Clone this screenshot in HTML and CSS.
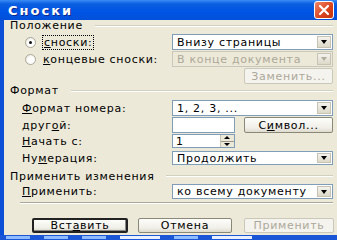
FILE: index.html
```html
<!DOCTYPE html>
<html lang="ru">
<head>
<meta charset="utf-8">
<link rel="stylesheet" href="styles.css">
</head>
<body>
<div class="win">
  <div class="title">
    <span class="title-text">Сноски</span>
    <div class="close">
      <svg width="12" height="12" viewBox="0 0 12 12"><path d="M2 2 L10 10 M10 2 L2 10" stroke="#fff" stroke-width="2.2" stroke-linecap="round"/></svg>
    </div>
  </div>
  <div class="frame">
    <div class="body">
      <div class="group-head g1"><span>Положение</span><i class="line"></i></div>
      <div class="row r1">
        <label class="radio-lbl"><span class="radio checked"></span><span class="focus"><u>с</u>носки:</span></label>
        <div class="combo"><span>Внизу страницы</span><b class="arrow"></b></div>
      </div>
      <div class="row r2">
        <label class="radio-lbl"><span class="radio"></span><span><u>к</u>онцевые сноски:</span></label>
        <div class="combo disabled"><span>В конце документа</span><b class="arrow"></b></div>
      </div>
      <div class="row r3">
        <span></span>
        <div class="btn disabled wide">Заменить...</div>
      </div>

      <div class="group-head g2"><span>Формат</span><i class="line"></i></div>
      <div class="row r4">
        <span class="lbl"><u>Ф</u>ормат номера:</span>
        <div class="combo"><span>1, 2, 3, ...</span><b class="arrow"></b></div>
      </div>
      <div class="row r5">
        <span class="lbl">друг<u>о</u>й:</span>
        <div class="pair">
          <div class="input"></div>
          <div class="btn wide">С<u>и</u>мвол...</div>
        </div>
      </div>
      <div class="row r6">
        <span class="lbl"><u>Н</u>ачать с:</span>
        <div class="spin"><span>1</span><b class="spin-btns"><i class="up"></i><i class="down"></i></b></div>
      </div>
      <div class="row r7">
        <span class="lbl">Ну<u>м</u>ерация:</span>
        <div class="combo"><span>Продолжить</span><b class="arrow"></b></div>
      </div>

      <div class="group-head g3"><span>Применить изменения</span><i class="line"></i></div>
      <div class="row r8">
        <span class="lbl"><u>П</u>рименить:</span>
        <div class="combo"><span>ко всему документу</span><b class="arrow"></b></div>
      </div>
      <div class="sep"></div>
      <div class="buttons">
        <div class="btn default b1">Вст<u>а</u>вить</div>
        <div class="btn b2">Отмена</div>
        <div class="btn disabled b3">Применить</div>
      </div>
    </div>
  </div>
  <div class="taskbar"><i></i><i></i><i></i><i class="w"></i><i></i><i class="w"></i></div>
</div>
</body>
</html>
```

FILE: styles.css
```css
* { box-sizing: border-box; }
html, body { margin: 0; padding: 0; background: #ece9d8; }
body { width: 337px; height: 240px; overflow: hidden; font-family: "DejaVu Sans", sans-serif; font-size: 11px; letter-spacing: 0.7px; color: #000; }
u { text-decoration: underline; text-underline-offset: 1px; }

.win { display: flex; flex-direction: column; height: 240px; }

.title {
  height: 20px; flex: none;
  background: linear-gradient(#3b8cf5 0px, #0a5ee0 4px, #0055e5 12px, #0250d8 20px);
  display: flex; align-items: center; justify-content: space-between;
  padding: 0 3px 0 8px;
}
.title-text { color: #fff; font-weight: bold; font-size: 13px; letter-spacing: 2px; text-shadow: 1px 1px 0 #0a2a8c; }
.close {
  width: 20px; height: 18px; border: 1px solid #fff; border-radius: 3px;
  background: linear-gradient(135deg, #f0866a, #d9421c 60%, #c0360f);
  display: flex; align-items: center; justify-content: center;
}

.frame { flex: 1; display: flex; border-left: 4px solid #0a4fd6; min-height: 0; }
.body { flex: 1; padding: 0 4px 0 6px; display: flex; flex-direction: column; }

.group-head { flex: none; display: flex; align-items: center; height: 11px; gap: 12px; line-height: 11px; }
.group-head .line { flex: 1; height: 2px; border-top: 1px solid #d0d0bf; border-bottom: 1px solid #fff; }
.g1 { margin-top: 0; }
.g2 { margin-top: 1px; }
.g3 { margin-top: 5px; height: 12px; }

.row { flex: none; display: flex; justify-content: space-between; align-items: center; padding-left: 12px; line-height: 13px; }
.lbl { display: block; }
.r1 { height: 16px; margin-top: 3px; }
.r2 { height: 16px; margin-top: 1px; }
.r3 { height: 16px; margin-top: 1px; }
.r4 { height: 16px; margin-top: 4px; }
.r5 { height: 16px; margin-top: 1px; }
.r6 { height: 14px; margin-top: 1px; }
.r7 { height: 14px; margin-top: 3px; }
.r8 { height: 15px; margin-top: 2px; }

.radio-lbl { display: flex; align-items: center; gap: 7px; padding-left: 3px; }
.radio { width: 11px; height: 11px; border-radius: 50%; border: 1px solid #aca899; background: radial-gradient(circle at 60% 60%, #fff 40%, #e2e0d3); position: relative; }
.radio.checked::after { content: ""; position: absolute; left: 3px; top: 3px; width: 3px; height: 3px; border-radius: 50%; background: #111; }
.focus { outline: 1px dotted #000; outline-offset: 0px; padding: 0 1px; }

.combo {
  width: 161px; height: 100%; background: #fff; border: 1px solid #7f9db9;
  display: flex; align-items: center; justify-content: space-between; padding-left: 4px;
}
.combo .arrow {
  width: 14px; height: calc(100% - 2px); margin-right: 1px;
  background: linear-gradient(#f4f3ee, #dcd9c8); border: 1px solid #c6c3b4; position: relative;
}
.combo .arrow::after { content: ""; position: absolute; left: 3px; top: calc(50% - 2px); border-left: 3.5px solid transparent; border-right: 3.5px solid transparent; border-top: 4px solid #000; }
.combo.disabled { background: #ece9d8; border-color: #c9c7ba; color: #aca899; }
.combo.disabled .arrow::after { border-top-color: #b0ad9f; }

.btn {
  width: 96px; height: 100%; border: 1px solid #8a8878; border-radius: 2px;
  background: linear-gradient(#fdfdfb, #f0efe8 70%, #dedbcd);
  display: flex; align-items: center; justify-content: center;
}
.btn.wide { width: 89px; }
.btn.disabled { color: #aca899; border-color: #cac8bb; background: #f4f3ee; }
.btn.default { border: 2px solid #222; box-shadow: inset -1px -1px 0 #888; }

.pair { display: flex; gap: 9px; height: 100%; }
.input { width: 63px; height: 100%; background: #fff; border: 1px solid #7f9db9; }

.spin { width: 63px; height: 100%; background: #fff; border: 1px solid #7f9db9; display: flex; justify-content: space-between; align-items: center; padding-left: 3px; margin-right: 98px; }
.spin-btns { width: 14px; height: 100%; display: flex; flex-direction: column; background: #ece9d8; border-left: 1px solid #c6c3b4; }
.spin-btns i { flex: 1; position: relative; }
.spin-btns .up { border-bottom: 1px solid #9a978a; }
.spin-btns .up::after { content: ""; position: absolute; left: 3px; top: 1px; border-left: 3.5px solid transparent; border-right: 3.5px solid transparent; border-bottom: 3px solid #000; }
.spin-btns .down::after { content: ""; position: absolute; left: 3px; top: 1px; border-left: 3.5px solid transparent; border-right: 3.5px solid transparent; border-top: 3px solid #000; }

.sep { flex: none; height: 2px; border-top: 1px solid #aca899; border-bottom: 1px solid #fff; margin: 3px 0 0 10px; }

.buttons { flex: none; display: flex; height: 15px; margin-top: 14px; margin-right: -1px; justify-content: flex-end; }
.buttons .b1 { width: 96px; }
.buttons .b2 { width: 94px; margin-left: 10px; }
.buttons .b3 { width: 90px; margin-left: 12px; }

.taskbar { height: 5px; flex: none; background: #1a56d6; display: flex; gap: 14px; padding: 1px 0 0 6px; }
.taskbar i { width: 24px; height: 3px; background: #8fbcff; }
.taskbar i.w { width: 40px; background: #e8f0ff; }
```
